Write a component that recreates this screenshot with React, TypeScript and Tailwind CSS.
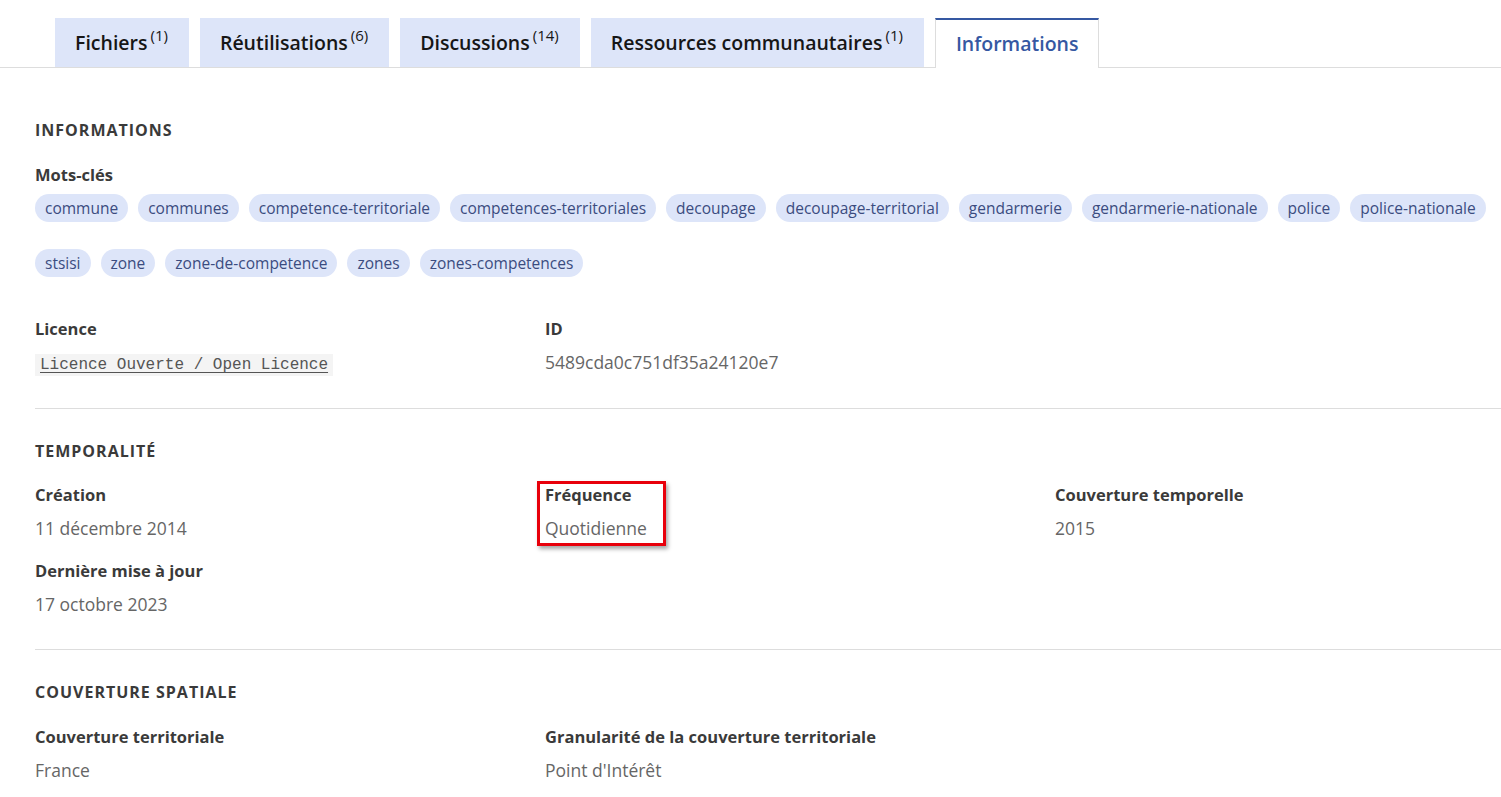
import React from 'react';

const tabs = [
  { label: 'Fichiers', count: '(1)' },
  { label: 'Réutilisations', count: '(6)' },
  { label: 'Discussions', count: '(14)' },
  { label: 'Ressources communautaires', count: '(1)' },
];

const keywords = [
  'commune',
  'communes',
  'competence-territoriale',
  'competences-territoriales',
  'decoupage',
  'decoupage-territorial',
  'gendarmerie',
  'gendarmerie-nationale',
  'police',
  'police-nationale',
  'stsisi',
  'zone',
  'zone-de-competence',
  'zones',
  'zones-competences',
];

const Field = ({ label, children }: { label: string; children: React.ReactNode }) => (
  <div>
    <p className="text-[16.5px] leading-6 font-bold text-[#3a3a3a]">{label}</p>
    <div className="mt-[9px] text-[17.5px] leading-6 text-[#666]">{children}</div>
  </div>
);

const SectionTitle = ({ children }: { children: React.ReactNode }) => (
  <h2 className="text-[16px] leading-6 font-bold uppercase tracking-[1px] text-[#3a3a3a]">{children}</h2>
);

export default function App() {
  return (
    <div className="min-h-screen w-full bg-white font-['Open_Sans','Noto_Sans',sans-serif] overflow-hidden">
      {/* Tabs */}
      <div className="pt-[18px] border-b border-[#dddddd]">
        <div className="flex pl-[55px] gap-[11px] -mb-px">
          {tabs.map((t) => (
            <button
              key={t.label}
              className="h-[49px] pl-5 pr-[21px] bg-[#dde5f9] text-[19.5px] font-semibold text-[#161616] flex items-center whitespace-nowrap"
            >
              {t.label}
              <sup className="ml-[3px] text-[15px] font-normal -top-[8px]">{t.count}</sup>
            </button>
          ))}
          <button className="h-[50px] px-5 bg-white border-t-2 border-t-[#3558a2] border-x border-x-[#dddddd] text-[19.5px] font-semibold text-[#3558a2] flex items-center">
            Informations
          </button>
        </div>
      </div>

      <div className="pl-[35px]">
        {/* Informations */}
        <section className="pt-[50px] pb-[31px] border-b border-[#dddddd]">
          <SectionTitle>Informations</SectionTitle>
          <p className="mt-[21px] text-[16.5px] leading-6 font-bold text-[#3a3a3a]">Mots-clés</p>
          <div className="mt-[7px] flex flex-wrap gap-x-[10px] gap-y-[27px] pr-2">
            {keywords.map((k) => (
              <span
                key={k}
                className="h-[28px] px-[10px] rounded-full bg-[#dde5f9] text-[15.5px] leading-[28px] text-[#3b4c80]"
              >
                {k}
              </span>
            ))}
          </div>
          <div className="mt-[40px] grid grid-cols-[510px_510px_1fr]">
            <Field label="Licence">
              <code className="bg-[#f4f4f4] px-[5px] py-[2px] text-[16px] text-[#555] underline underline-offset-[3px] font-['Liberation_Mono',monospace]">
                Licence Ouverte / Open Licence
              </code>
            </Field>
            <Field label="ID">5489cda0c751df35a24120e7</Field>
          </div>
        </section>

        {/* Temporalité */}
        <section className="pt-[30px] pb-[33px] border-b border-[#dddddd]">
          <SectionTitle>Temporalité</SectionTitle>
          <div className="mt-[20px] grid grid-cols-[510px_510px_1fr] gap-y-[19px]">
            <Field label="Création">11 décembre 2014</Field>
            <div className="relative">
              <Field label="Fréquence">Quotidienne</Field>
              <div className="absolute -left-[8px] -top-[2px] w-[129px] h-[65px] border-[3px] border-[#e8000b] shadow-[2px_3px_4px_rgba(0,0,0,0.35)] pointer-events-none" />
            </div>
            <Field label="Couverture temporelle">2015</Field>
            <Field label="Dernière mise à jour">17 octobre 2023</Field>
          </div>
        </section>

        {/* Couverture spatiale */}
        <section className="pt-[30px] pb-10">
          <SectionTitle>Couverture spatiale</SectionTitle>
          <div className="mt-[21px] grid grid-cols-[510px_510px_1fr]">
            <Field label="Couverture territoriale">France</Field>
            <Field label="Granularité de la couverture territoriale">Point d'Intérêt</Field>
          </div>
        </section>
      </div>
    </div>
  );
}
